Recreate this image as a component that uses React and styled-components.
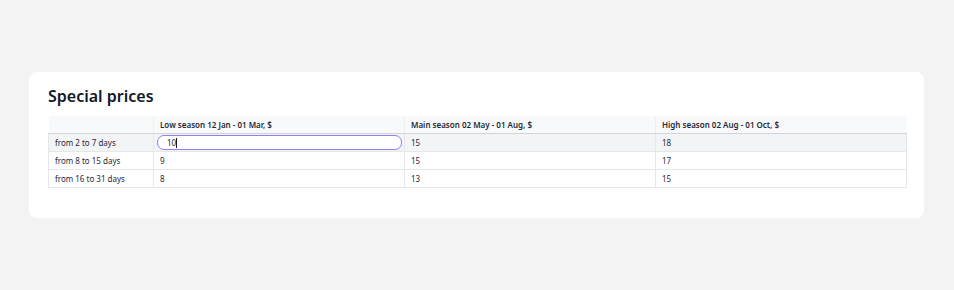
import React from 'react';
import styled, { createGlobalStyle } from 'styled-components';

const GlobalStyle = createGlobalStyle`
  html, body {
    margin: 0;
    background: #f3f3f3;
    font-family: "Noto Sans", "Open Sans", sans-serif;
  }
`;

const Page = styled.div`
  padding: 72px 30px 0 29px;
`;

const Card = styled.section`
  background: #fff;
  border-radius: 8px;
  padding: 12px 18px 30px 19px;
`;

const Title = styled.h2`
  margin: 0 0 8px 0;
  font-size: 16px;
  line-height: 24px;
  font-weight: 600;
  color: #111827;
`;

const Table = styled.table`
  width: 858px;
  border-collapse: collapse;
  table-layout: fixed;
  font-size: 8px;
  color: #1f2937;
`;

const HeadCell = styled.th`
  height: 17px;
  padding: 0 6px;
  text-align: left;
  font-weight: 560;
  background: #f8f9fa;
  border-bottom: 1px solid #d1d5db;
  border-left: 1px solid #eef0f2;
  &:first-child { border-left: none; }
`;

const Row = styled.tr`
  background: ${(p) => (p.$active ? '#f3f4f6' : '#fff')};
`;

const Cell = styled.td`
  height: 17px;
  padding: 0 6px;
  border: 1px solid #e5e7eb;
  border-top: none;
  white-space: nowrap;
`;

const EditCell = styled(Cell)`
  padding: 0 2px 0 3px;
`;

const Field = styled.div`
  display: flex;
  align-items: center;
  height: 13px;
  padding: 0 9px;
  border: 1px solid #8b80f0;
  border-radius: 7px;
  background: #fff;
`;

const Caret = styled.span`
  display: inline-block;
  width: 1px;
  height: 10px;
  background: #111827;
`;

const seasons = [
  'Low season 12 Jan - 01 Mar, $',
  'Main season 02 May - 01 Aug, $',
  'High season 02 Aug - 01 Oct, $',
];

const rows = [
  { label: 'from 2 to 7 days', prices: ['10', '15', '18'] },
  { label: 'from 8 to 15 days', prices: ['9', '15', '17'] },
  { label: 'from 16 to 31 days', prices: ['8', '13', '15'] },
];

export default function App() {
  return (
    <>
      <GlobalStyle />
      <Page>
        <Card>
          <Title>Special prices</Title>
          <Table>
            <colgroup>
              <col style={{ width: 105 }} />
              <col style={{ width: 251 }} />
              <col style={{ width: 251 }} />
              <col style={{ width: 251 }} />
            </colgroup>
            <thead>
              <tr>
                <HeadCell />
                {seasons.map((s) => (
                  <HeadCell key={s}>{s}</HeadCell>
                ))}
              </tr>
            </thead>
            <tbody>
              {rows.map((r, i) => (
                <Row key={r.label} $active={i === 0}>
                  <Cell>{r.label}</Cell>
                  {r.prices.map((p, j) =>
                    i === 0 && j === 0 ? (
                      <EditCell key={j}>
                        <Field>
                          {p}
                          <Caret />
                        </Field>
                      </EditCell>
                    ) : (
                      <Cell key={j}>{p}</Cell>
                    )
                  )}
                </Row>
              ))}
            </tbody>
          </Table>
        </Card>
      </Page>
    </>
  );
}
